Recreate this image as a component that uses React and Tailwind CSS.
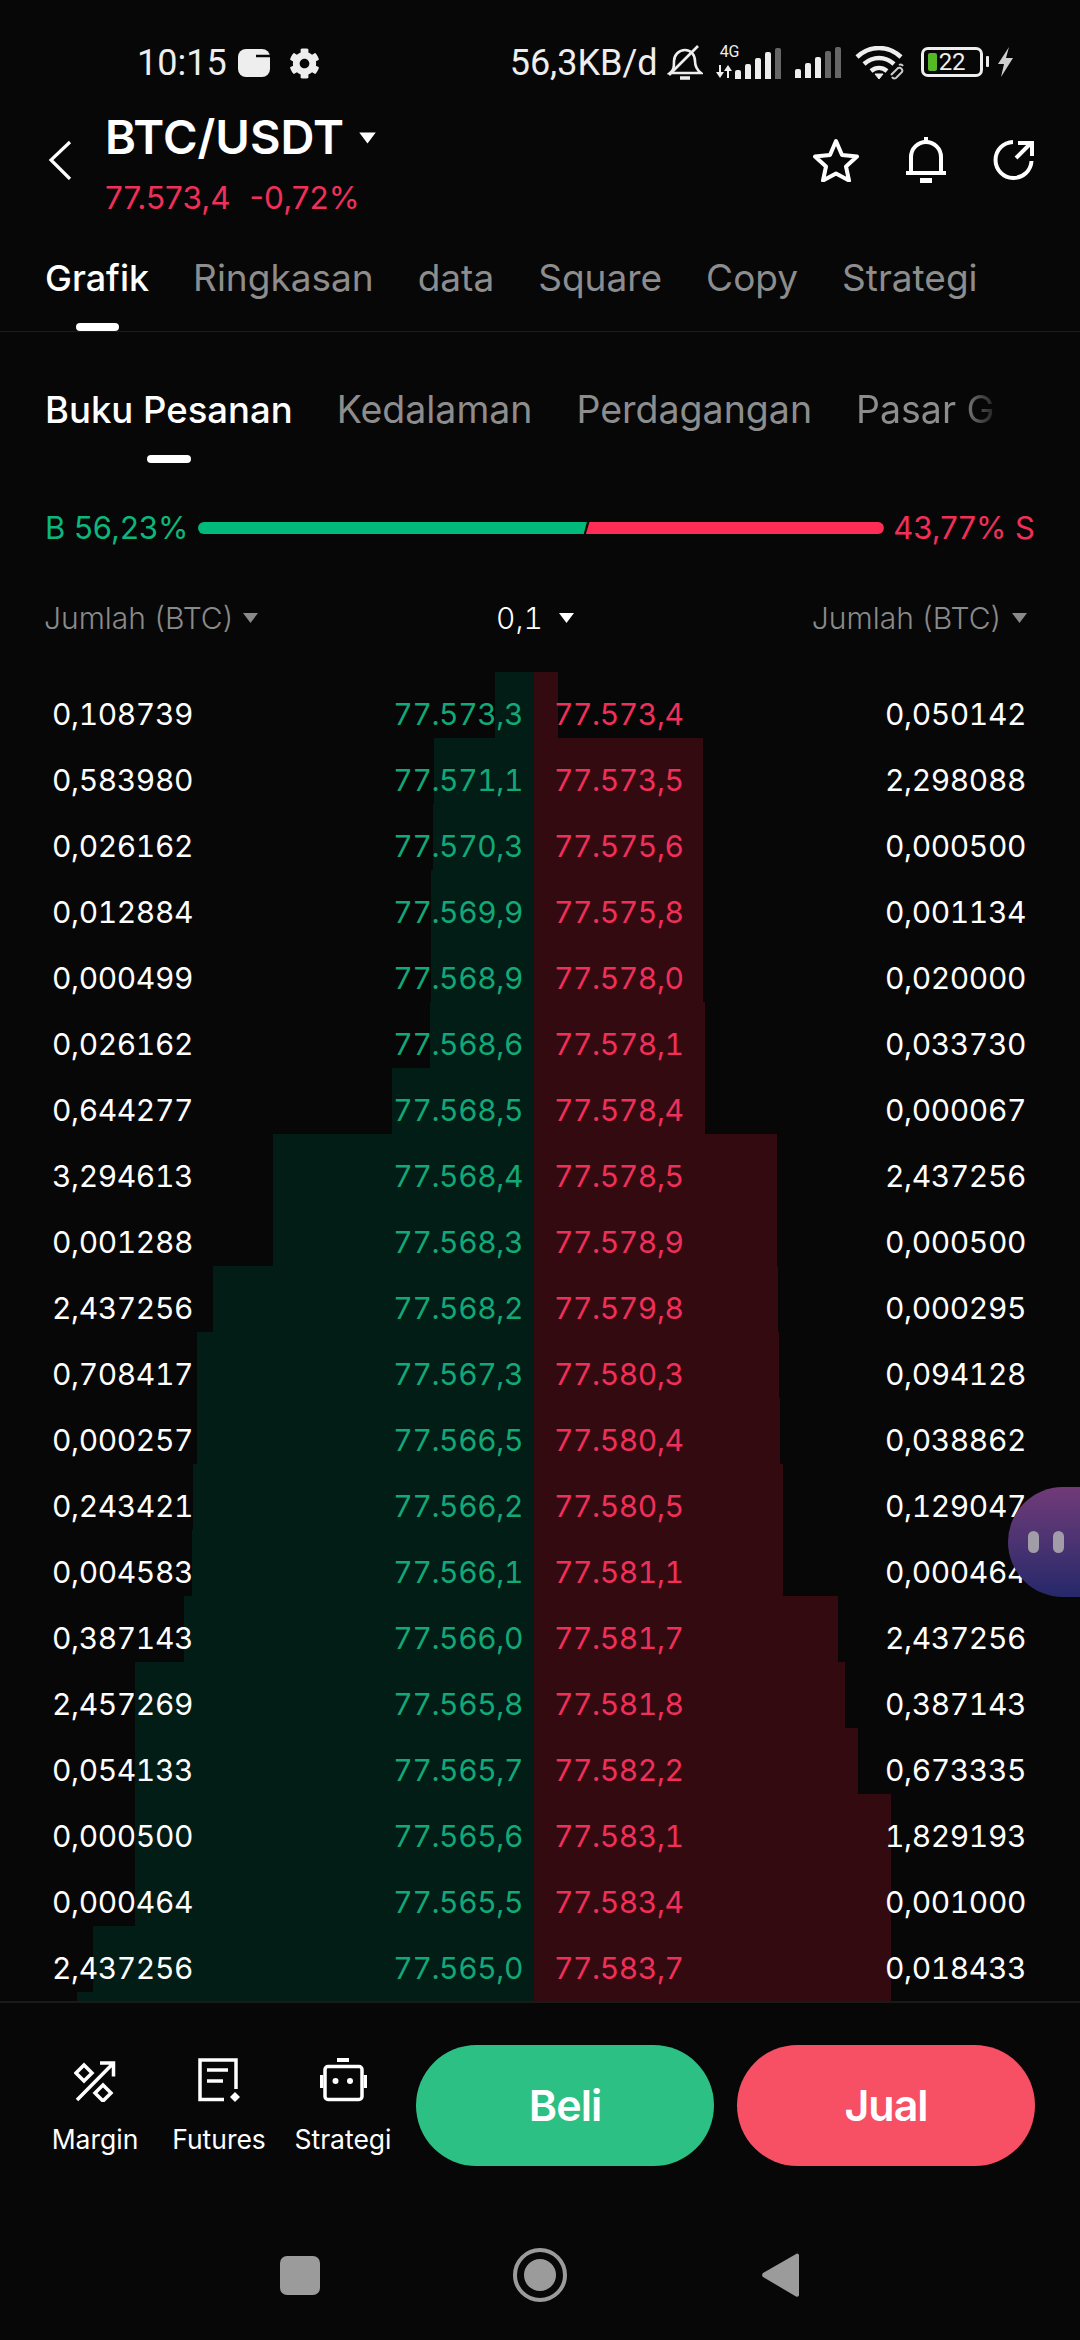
import React from "react";
import { FaCog } from "react-icons/fa";

const rows = [
  ["0,108739", "77.573,3", "77.573,4", "0,050142", 39.5, 24],
  ["0,583980", "77.571,1", "77.573,5", "2,298088", 100, 168.5],
  ["0,026162", "77.570,3", "77.575,6", "0,000500", 101.5, 169],
  ["0,012884", "77.569,9", "77.575,8", "0,001134", 103, 169],
  ["0,000499", "77.568,9", "77.578,0", "0,020000", 103, 169],
  ["0,026162", "77.568,6", "77.578,1", "0,033730", 104, 171],
  ["0,644277", "77.568,5", "77.578,4", "0,000067", 142, 171],
  ["3,294613", "77.568,4", "77.578,5", "2,437256", 261, 243],
  ["0,001288", "77.568,3", "77.578,9", "0,000500", 261, 243],
  ["2,437256", "77.568,2", "77.579,8", "0,000295", 321, 244],
  ["0,708417", "77.567,3", "77.580,3", "0,094128", 337, 245],
  ["0,000257", "77.566,5", "77.580,4", "0,038862", 337, 246],
  ["0,243421", "77.566,2", "77.580,5", "0,129047", 341, 249],
  ["0,004583", "77.566,1", "77.581,1", "0,000464", 342, 249],
  ["0,387143", "77.566,0", "77.581,7", "2,437256", 350, 304],
  ["2,457269", "77.565,8", "77.581,8", "0,387143", 399, 311],
  ["0,054133", "77.565,7", "77.582,2", "0,673335", 399, 324],
  ["0,000500", "77.565,6", "77.583,1", "1,829193", 399, 357],
  ["0,000464", "77.565,5", "77.583,4", "0,001000", 399, 357],
  ["2,437256", "77.565,0", "77.583,7", "0,018433", 441, 357],
  ["", "", "", "", 457, 357],
];

const Caret = ({ className }) => (
  <svg width="17" height="12" viewBox="0 0 17 12" className={className}>
    <path d="M1 1h15L8.5 11z" fill="currentColor" />
  </svg>
);

function SignalBars({ lit, dim }) {
  return (
    <div className="flex items-end gap-[4px] h-[31px]">
      {lit.map((h, i) => (
        <div key={i} className="w-[6px] rounded-t-[2px] bg-[#eeeeee]" style={{ height: h }} />
      ))}
      {dim.map((h, i) => (
        <div key={i} className="w-[6px] rounded-t-[2px] bg-[#666666]" style={{ height: h }} />
      ))}
    </div>
  );
}

function StatusBar() {
  return (
    <div className="h-[104px] pt-[45px] pl-[137px] flex items-start text-[#eeeeee] font-['Roboto',sans-serif]">
      <span className="text-[36px] leading-[36px]">10:15</span>
      <svg width="32" height="28" viewBox="0 0 32 28" className="ml-[11px] mt-[4px]">
        <rect x="0" y="0" width="32" height="28" rx="8" fill="#eeeeee" />
        <path d="M18 7h14" stroke="#070707" strokeWidth="2.5" />
      </svg>
      <FaCog className="ml-[19px] mt-[3px] text-[31px] text-[#eeeeee]" />
      <span className="ml-[190px] text-[36px] leading-[36px]">56,3KB/d</span>
      <svg width="36" height="37" viewBox="0 0 36 37" className="ml-[9px]" fill="none" stroke="#eeeeee" strokeWidth="2.6">
        <path d="M3 28c4-3 4-6 4-12 0-6 5-11 11-11s10 5 10 11c0 6 2 9 6 12z" />
        <path d="M2 30 31 1" />
        <path d="M13 33h10" strokeWidth="3.5" />
      </svg>
      <div className="ml-[13px] relative w-[66px] h-[32px] mt-[2px] flex items-end">
        <span className="absolute left-[4px] top-[-3px] text-[16px] leading-[16px]">4G</span>
        <svg width="16" height="13" viewBox="0 0 16 13" className="mr-[3px] mb-[1px]">
          <path d="M5 0v7h3L4 13 0 7h3V0zM11 13V6H8l4-6 4 6h-3v7z" fill="#eeeeee" />
        </svg>
        <SignalBars lit={[9, 15, 21, 27]} dim={[31]} />
      </div>
      <div className="ml-[13px] mt-[2px]">
        <SignalBars lit={[9, 15, 21]} dim={[27, 31]} />
      </div>
      <svg width="52" height="34" viewBox="0 0 52 34" className="ml-[14px] mt-[1px]" fill="none" stroke="#eeeeee" strokeWidth="4.5">
        <path d="M2 11c13-12 31-12 44 0" />
        <path d="M9 18c9-8 21-8 30 0" />
        <path d="M16 25c5-4 11-4 16 0" />
        <path d="M20 28l4 5 4-5z" fill="#eeeeee" strokeWidth="1" />
        <path d="M36 29l7-7a3 3 0 0 1 4 4l-6 6a3 3 0 0 1-4-1M48 20a3 3 0 0 0-4-1" stroke="#cccccc" strokeWidth="2" />
      </svg>
      <div className="ml-[14px] mt-[2px] w-[62px] h-[30px] rounded-[7px] border-[3px] border-[#eeeeee] flex items-center pl-[4px] gap-[2px]">
        <div className="w-[9px] h-[18px] rounded-[2px] bg-[#55b824]" />
        <span className="text-[24px] leading-[24px]">22</span>
      </div>
      <div className="ml-[3px] mt-[11px] w-[3px] h-[11px] bg-[#eeeeee] rounded-[1px]" />
      <svg width="17" height="30" viewBox="0 0 17 30" className="ml-[8px] mt-[2px]">
        <path d="M12 0 1 17h6l-3 13 12-19H9z" fill="#cfcfcf" />
      </svg>
    </div>
  );
}

function Header() {
  return (
    <div className="h-[112px] pl-[48px] pr-[46px] flex items-center">
      <svg width="24" height="40" viewBox="0 0 24 40" fill="none" stroke="#fff" strokeWidth="3.2">
        <path d="M22 2 3 20l19 19" />
      </svg>
      <div className="ml-[33px] pt-[5px]">
        <div className="flex items-start">
          <span className="text-[47px] leading-[56px] font-semibold text-white">BTC/USDT</span>
          <Caret className="ml-[15px] mt-[23px] text-white scale-110" />
        </div>
        <div className="mt-[15px] flex gap-[19px] text-[31.5px] leading-[36px] text-[#f0305a]">
          <span>77.573,4</span>
          <span>-0,72%</span>
        </div>
      </div>
      <div className="ml-auto flex items-center gap-[47px]">
        <svg width="46" height="44" viewBox="0 0 46 44" fill="none" stroke="#fff" strokeWidth="4" strokeLinejoin="round">
          <path d="M23 3l6 14 15 1.500-11 10 3 14-13-7-13 7 3-14L2 18.500 17 17z" />
        </svg>
        <svg width="40" height="46" viewBox="0 0 40 46" fill="none" stroke="#fff" strokeWidth="4">
          <path d="M5 36V20a15 15 0 0 1 30 0v16" />
          <path d="M0 36h40M20 0v6" />
          <path d="M14 43.500h12" strokeWidth="5" />
        </svg>
        <svg width="41" height="40" viewBox="0 0 41 40" fill="none" stroke="#fff" strokeWidth="4">
          <path d="M20 2a18 18 0 1 0 18.500 19" />
          <path d="M23 18 38 3M25 3h14v13" />
        </svg>
      </div>
    </div>
  );
}

function TopTabs() {
  const tabs = ["Ringkasan", "data", "Square", "Copy", "Strategi"];
  return (
    <div className="h-[116px] pt-[40px] pl-[45px] flex items-start gap-[44px] border-b border-[#1c1c1c] text-[37px] leading-[44px]">
      <div className="flex flex-col items-center">
        <span className="font-medium text-[36px] text-white">Grafik</span>
        <div className="mt-[23px] w-[43px] h-[8px] rounded-[4px] bg-white" />
      </div>
      {tabs.map((t) => (
        <span key={t} className="text-[#8d8d8d]">{t}</span>
      ))}
    </div>
  );
}

function SubTabs() {
  return (
    <div className="pt-[56px] pl-[45px] flex items-start gap-[44px] text-[37.5px] leading-[44px]">
      <div className="flex flex-col items-center">
        <span className="font-medium text-[36.500px] text-white">Buku Pesanan</span>
        <div className="mt-[23px] w-[44px] h-[8px] rounded-[4px] bg-white" />
      </div>
      <span className="text-[#8d8d8d]">Kedalaman</span>
      <span className="text-[#8d8d8d]">Perdagangan</span>
      <span className="bg-gradient-to-r from-[#8d8d8d] from-75% to-[#222222] bg-clip-text text-transparent">Pasar G</span>
    </div>
  );
}

function Ratio() {
  return (
    <div className="mt-[47px] h-[36px] px-[45px] flex items-center justify-between text-[31px] leading-[36px]">
      <span className="text-[#0db67c]">B 56,23%</span>
      <div className="w-[686px] h-[12px] flex">
        <div className="w-[389px] bg-[#00ba7c] rounded-l-[6px] [clip-path:polygon(0_0,100%_0,99.2%_100%,0_100%)]" />
        <div className="flex-1 bg-[#ff2d55] rounded-r-[6px] -ml-[1px] [clip-path:polygon(1.200%_0,100%_0,100%_100%,0_100%)]" />
      </div>
      <span className="text-[#f0305a]">43,77% S</span>
    </div>
  );
}

function ColumnHead() {
  return (
    <div className="mt-[54px] h-[36px] pl-[44px] pr-[52px] flex items-center justify-between text-[30px] leading-[36px] font-light text-[#8a8a8a]">
      <div className="flex items-center gap-[9px]">
        <span>Jumlah (BTC)</span>
        <Caret className="text-[#8a8a8a]" />
      </div>
      <div className="flex items-center gap-[15px] text-white">
        <span className="tabular-nums">0,1</span>
        <Caret />
      </div>
      <div className="flex items-center gap-[10px]">
        <span>Jumlah (BTC)</span>
        <Caret className="text-[#8a8a8a]" />
      </div>
    </div>
  );
}

function Book() {
  return (
    <div className="mt-[36px] h-[1329px] overflow-hidden">
      {rows.map(([bidQty, bid, ask, askQty, bidDepth, askDepth], i) => (
        <div key={i} className="h-[66px] flex text-[30px] leading-[36px] tabular-nums tracking-[-0.4px]">
          <div className="relative w-[534px] pt-[24px] pl-[52px] pr-[11px] flex justify-between">
            <div className="absolute inset-y-0 right-0 bg-[#021d15]" style={{ width: bidDepth }} />
            <span className="relative text-white">{bidQty}</span>
            <span className="relative text-[#12a878]">{bid}</span>
          </div>
          <div className="relative w-[546px] pt-[24px] pl-[20px] pr-[54px] flex justify-between">
            <div className="absolute inset-y-0 left-0 bg-[#340a11]" style={{ width: askDepth }} />
            <span className="relative text-[#f0305a]">{ask}</span>
            <span className="relative text-white">{askQty}</span>
          </div>
        </div>
      ))}
    </div>
  );
}

function Tool({ label, icon }) {
  return (
    <div className="w-[124px] pt-[13px] flex flex-col items-center">
      <div className="h-[44px] flex items-end">{icon}</div>
      <span className="mt-[19px] text-[26.5px] leading-[36px] text-white">{label}</span>
    </div>
  );
}

function ActionBar() {
  return (
    <div className="border-t-2 border-[#1a1a1a] pt-[42px] pl-[33px] flex items-start">
      <Tool
        label="Margin"
        icon={
          <svg width="42" height="41" viewBox="0 0 42 41" fill="none" stroke="#fff" strokeWidth="3.5">
            <path d="M3 39 39.500 2M26 2h13.500v13.500" />
            <path d="M10 4l8 8-8 8-8-8zM29 24l8 8-8 8-8-8z" />
          </svg>
        }
      />
      <Tool
        label="Futures"
        icon={
          <svg width="42" height="44" viewBox="0 0 42 44" fill="none" stroke="#fff" strokeWidth="3.5">
            <path d="M26 41.500H2V2h36v29" />
            <path d="M9 12h21M9 23h16" />
            <path d="M37 34l5 5-5 5-5-5z" fill="#fff" stroke="none" />
          </svg>
        }
      />
      <Tool
        label="Strategi"
        icon={
          <svg width="47" height="44" viewBox="0 0 47 44" fill="none" stroke="#fff" strokeWidth="3.5">
            <rect x="5" y="8.500" width="37" height="33" rx="3" />
            <path d="M17 2h12" strokeWidth="4" />
            <path d="M1.500 17v13M45.500 17v13" />
            <circle cx="15.500" cy="23" r="3" fill="#fff" stroke="none" />
            <circle cx="30" cy="23" r="3" fill="#fff" stroke="none" />
          </svg>
        }
      />
      <div className="ml-[11px] flex gap-[23px]">
        <button className="w-[298px] h-[121px] rounded-full bg-[#2cc084] text-white text-[43px] font-semibold tracking-[-1px]">Beli</button>
        <button className="w-[298px] h-[121px] rounded-full bg-[#f74f63] text-white text-[43px] font-semibold tracking-[-1px]">Jual</button>
      </div>
    </div>
  );
}

function NavBar() {
  return (
    <div className="mt-[82px] mx-[180px] flex items-center">
      <div className="w-[240px] flex justify-center">
        <div className="w-[40px] h-[39px] rounded-[7px] bg-[#9b9b9b]" />
      </div>
      <div className="w-[240px] flex justify-center">
        <div className="w-[54px] h-[54px] rounded-full border-[4px] border-[#9b9b9b] flex items-center justify-center">
          <div className="w-[32px] h-[32px] rounded-full bg-[#9b9b9b]" />
        </div>
      </div>
      <div className="w-[240px] flex justify-center">
        <svg width="37" height="46" viewBox="0 0 37 46">
          <path d="M35 1.500a2 2 0 0 1 2 1.500v40a2 2 0 0 1-3 1.500L1 25a3 3 0 0 1 0-4z" fill="#9b9b9b" />
        </svg>
      </div>
    </div>
  );
}

export default function App() {
  return (
    <div className="relative w-[1080px] h-[2340px] overflow-hidden bg-[#070707] font-['Inter',sans-serif]">
      <StatusBar />
      <Header />
      <TopTabs />
      <SubTabs />
      <Ratio />
      <ColumnHead />
      <Book />
      <ActionBar />
      <NavBar />
      {/* Floating assistant bubble docked to the right edge */}
      <div className="absolute right-0 top-[1487px] w-[72px] h-[110px] rounded-l-[55px] bg-gradient-to-b from-[#713a78] to-[#25286a] pl-[20px] flex items-center gap-[14px]">
        <div className="w-[11px] h-[22px] rounded-full bg-[#a29ca8]" />
        <div className="w-[11px] h-[22px] rounded-full bg-[#a29ca8]" />
      </div>
    </div>
  );
}
